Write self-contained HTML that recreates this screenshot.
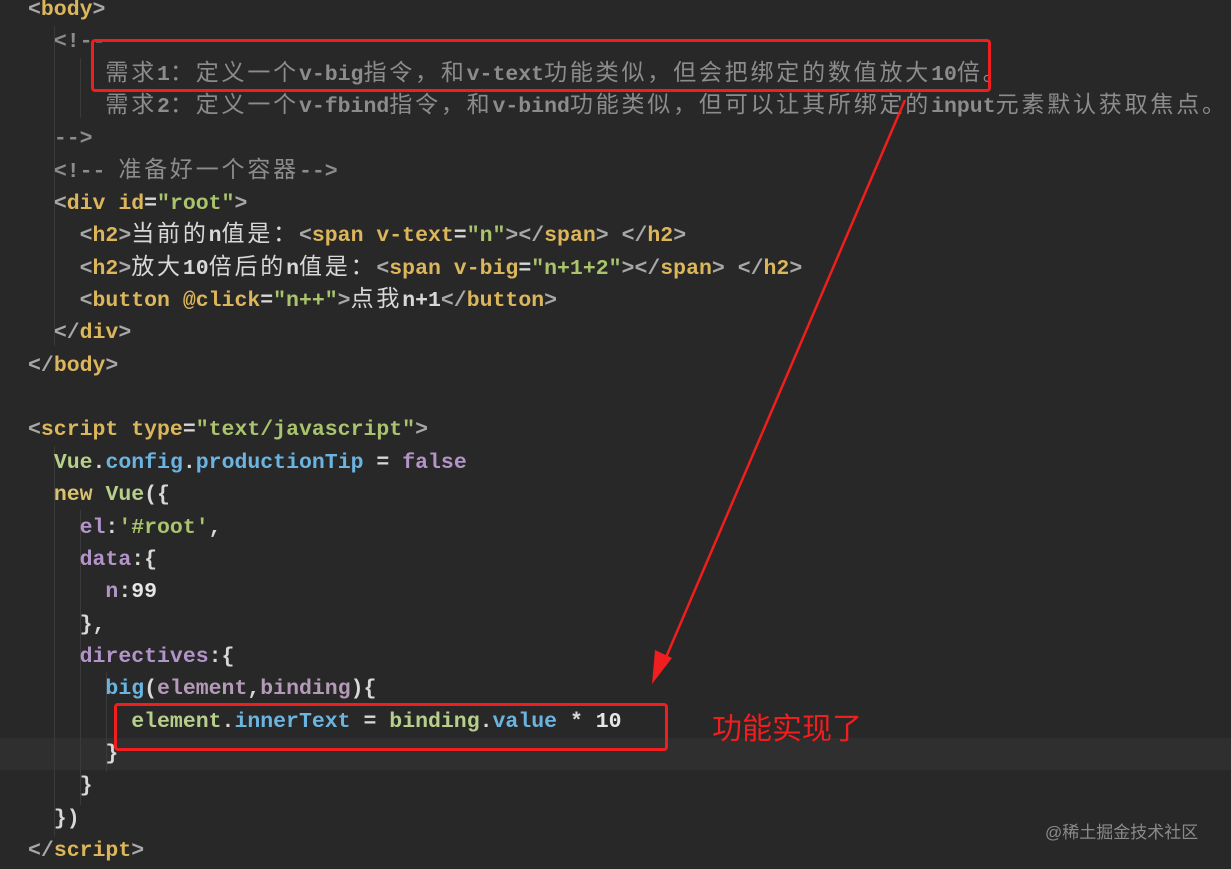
<!DOCTYPE html>
<html><head><meta charset="utf-8"><style>
html,body{margin:0;padding:0;background:#282828;width:1231px;height:869px;overflow:hidden;position:relative}
pre{position:absolute;left:28px;top:-6px;margin:0;font-family:"Liberation Mono",monospace;font-size:21.5px;line-height:32.35px;color:#d8d8d8;font-weight:bold;white-space:pre}
.c{letter-spacing:2.8px;font-family:"Noto Sans CJK SC",sans-serif;font-weight:normal;font-size:23px;line-height:0}
.p{color:#a8a8a8}.t{color:#dcb65a}.s{color:#a9c46c}.cm{color:#8c8c8c}.w{color:#e6e6e6}
.g{color:#b6cf8a}.b{color:#6cb4e0}.v{color:#b294c8}.k{color:#d8c270}.pk{color:#b49ab8}
.hl{position:absolute;left:0;top:738px;width:1231px;height:32px;background:#2f2f2f}
.guide{position:absolute;width:1px;background:#3a3a3a}
.box{position:absolute;border:3px solid #f01e1e;border-radius:4px}
</style></head><body>
<div class="hl"></div>
<div class="guide" style="left:54px;top:26px;height:320px"></div>
<div class="guide" style="left:80px;top:58px;height:60px"></div>
<div class="guide" style="left:54px;top:446px;height:390px"></div>
<div class="guide" style="left:80px;top:510px;height:295px"></div>
<div class="guide" style="left:106px;top:672px;height:100px"></div>
<pre><span class="p">&lt;</span><span class="t">body</span><span class="p">&gt;</span>
  <span class="cm">&lt;!--</span>
      <span class="cm"><span class="c">需求</span>1<span class="c">：定义一个</span>v-big<span class="c">指令，和</span>v-text<span class="c">功能类似，但会把绑定的数值放大</span>10<span class="c">倍。</span></span>
      <span class="cm"><span class="c">需求</span>2<span class="c">：定义一个</span>v-fbind<span class="c">指令，和</span>v-bind<span class="c">功能类似，但可以让其所绑定的</span>input<span class="c">元素默认获取焦点。</span></span>
  <span class="cm">--&gt;</span>
  <span class="cm">&lt;!-- <span class="c">准备好一个容器</span>--&gt;</span>
  <span class="p">&lt;</span><span class="t">div id</span>=<span class="s">"root"</span><span class="p">&gt;</span>
    <span class="p">&lt;</span><span class="t">h2</span><span class="p">&gt;</span><span class="c">当前的</span>n<span class="c">值是：</span><span class="p">&lt;</span><span class="t">span v-text</span>=<span class="s">"n"</span><span class="p">&gt;&lt;/</span><span class="t">span</span><span class="p">&gt;</span> <span class="p">&lt;/</span><span class="t">h2</span><span class="p">&gt;</span>
    <span class="p">&lt;</span><span class="t">h2</span><span class="p">&gt;</span><span class="c">放大</span>10<span class="c">倍后的</span>n<span class="c">值是：</span><span class="p">&lt;</span><span class="t">span v-big</span>=<span class="s">"n+1+2"</span><span class="p">&gt;&lt;/</span><span class="t">span</span><span class="p">&gt;</span> <span class="p">&lt;/</span><span class="t">h2</span><span class="p">&gt;</span>
    <span class="p">&lt;</span><span class="t">button @click</span>=<span class="s">"n++"</span><span class="p">&gt;</span><span class="c">点我</span>n+1<span class="p">&lt;/</span><span class="t">button</span><span class="p">&gt;</span>
  <span class="p">&lt;/</span><span class="t">div</span><span class="p">&gt;</span>
<span class="p">&lt;/</span><span class="t">body</span><span class="p">&gt;</span>

<span class="p">&lt;</span><span class="t">script type</span>=<span class="s">"text/javascript"</span><span class="p">&gt;</span>
  <span class="g">Vue</span>.<span class="b">config</span>.<span class="b">productionTip</span> = <span class="v">false</span>
  <span class="k">new</span> <span class="g">Vue</span>({
    <span class="v">el</span>:<span class="s">'#root'</span>,
    <span class="v">data</span>:{
      <span class="v">n</span>:<span class="w">99</span>
    },
    <span class="v">directives</span>:{
      <span class="b">big</span>(<span class="pk">element</span>,<span class="pk">binding</span>){
        <span class="g">element</span>.<span class="b">innerText</span> = <span class="g">binding</span>.<span class="b">value</span> * <span class="w">10</span>
      }
    }
  })
<span class="p">&lt;/</span><span class="t">script</span><span class="p">&gt;</span></pre>
<div class="box" style="left:91px;top:39px;width:894px;height:47px"></div>
<div class="box" style="left:114px;top:703px;width:548px;height:42px"></div>
<svg style="position:absolute;left:0;top:0" width="1231" height="869">
<line x1="905" y1="100" x2="664" y2="662" stroke="#f01e1e" stroke-width="2.5"/>
<polygon points="652,684 655,650 672,658" fill="#f01e1e"/>
</svg>
<div style="position:absolute;left:712px;top:706px;font-family:'Noto Sans CJK SC',sans-serif;font-size:30px;color:#f01e1e;line-height:40px">功能实现了</div>
<div style="position:absolute;left:1045px;top:821px;font-family:'Liberation Sans','Noto Sans CJK SC',sans-serif;font-size:17px;color:#8a8a8a;line-height:24px">@稀土掘金技术社区</div>
</body></html>
